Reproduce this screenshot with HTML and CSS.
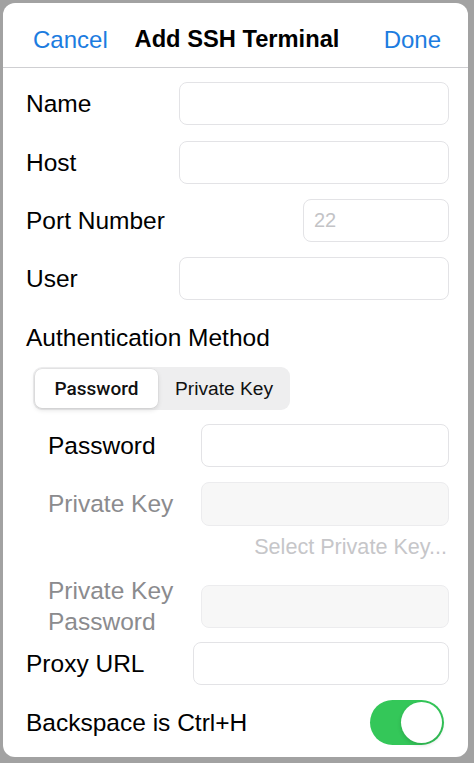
FILE: index.html
```html
<!DOCTYPE html>
<html>
<head>
<meta charset="utf-8">
<link rel="stylesheet" href="styles.css">
</head>
<body>
<div class="sheet">
  <header class="nav">
    <span class="nav-btn left">Cancel</span>
    <span class="nav-title">Add SSH Terminal</span>
    <span class="nav-btn right">Done</span>
  </header>
  <main class="form">
    <div class="row r-name">
      <span class="label">Name</span>
      <span class="field"></span>
    </div>
    <div class="row r-host">
      <span class="label">Host</span>
      <span class="field"></span>
    </div>
    <div class="row r-port">
      <span class="label">Port Number</span>
      <span class="field port"><span class="ph">22</span></span>
    </div>
    <div class="row r-user">
      <span class="label">User</span>
      <span class="field"></span>
    </div>
    <div class="row r-auth">
      <span class="label">Authentication Method</span>
    </div>
    <div class="segment">
      <span class="seg selected">Password</span>
      <span class="seg">Private Key</span>
    </div>
    <div class="row sub r-pass">
      <span class="label">Password</span>
      <span class="field"></span>
    </div>
    <div class="row sub r-key">
      <span class="label disabled">Private Key</span>
      <span class="field off"></span>
    </div>
    <div class="select-key">Select Private Key...</div>
    <div class="row sub r-keypass">
      <span class="label disabled two">Private Key<br>Password</span>
      <span class="field off"></span>
    </div>
    <div class="row r-proxy">
      <span class="label proxy">Proxy URL</span>
      <span class="field"></span>
    </div>
    <div class="row r-bs">
      <span class="label">Backspace is Ctrl+H</span>
      <span class="toggle"><span class="knob"></span></span>
    </div>
  </main>
</div>
</body>
</html>
```
FILE: styles.css
```css
html, body {
  margin: 0;
  padding: 0;
}
body {
  width: 474px;
  height: 763px;
  background: #a2a2a2;
  font-family: "Liberation Sans", Arial, sans-serif;
  color: #000;
  overflow: hidden;
}
.sheet {
  margin: 3px 0 0 3px;
  width: 465px;
  height: 754px;
  background: #fff;
  border-radius: 12px;
  overflow: hidden;
}
.nav {
  height: 65px;
  border-bottom: 1.5px solid #cfcfd2;
  box-sizing: border-box;
  display: grid;
  grid-template-columns: 1fr auto 1fr;
  align-items: center;
  padding: 9px 27px 0 30px;
  font-size: 24px;
}
.nav-btn {
  color: #1c7ce0;
}
.nav-btn.right {
  justify-self: end;
}
.nav-title {
  font-weight: bold;
  font-size: 23.7px;
}
.form {
  display: flex;
  flex-direction: column;
  padding: 0 19px 0 23px;
}
.row {
  display: flex;
  align-items: center;
  min-height: 43px;
}
.row.sub {
  padding-left: 22px;
}
.label {
  font-size: 24.5px;
  width: 153px;
  flex: none;
  white-space: nowrap;
}
.label.disabled {
  color: #8b8b8e;
}
.label.two {
  line-height: 31px;
}
.label.proxy {
  width: 167px;
}
.field {
  flex: 1;
  height: 43px;
  box-sizing: border-box;
  border: 1px solid #e3e3e6;
  border-radius: 8px;
  background: #fff;
  display: flex;
  align-items: center;
}
.field.off {
  background: #f7f7f7;
  border-color: #ececee;
}
.field.port {
  flex: none;
  width: 146px;
  margin-left: auto;
  padding-left: 10px;
}
.ph {
  font-size: 20px;
  color: #c3c3c6;
}
.r-name { margin-top: 14px; }
.r-host { margin-top: 16px; }
.r-port { margin-top: 15px; }
.r-user { margin-top: 15px; }
.r-auth { margin-top: 16px; }
.r-auth .label { width: auto; }
.segment {
  margin: 8px 0 0 7px;
  width: 257px;
  height: 43px;
  box-sizing: border-box;
  background: #eeeeef;
  border-radius: 9px;
  padding: 2px;
  display: flex;
}
.seg {
  flex: 1;
  display: flex;
  align-items: center;
  justify-content: center;
  font-size: 19.2px;
  color: #111;
  padding-left: 2px;
}
.seg.selected {
  flex: none;
  width: 123px;
  padding-left: 0;
  background: #fff;
  border-radius: 7px;
  box-shadow: 0 2px 5px rgba(0, 0, 0, 0.12), 0 0 0 0.5px rgba(0, 0, 0, 0.06);
  font-family: Roboto, "Liberation Sans", sans-serif;
  font-weight: 500;
  font-size: 19px;
}
.r-pass { margin-top: 14px; }
.r-key { margin-top: 15px; }
.r-key .field { height: 44px; }
.select-key {
  margin-top: 10px;
  height: 22px;
  line-height: 22px;
  text-align: right;
  padding-right: 2px;
  font-size: 21.6px;
  color: #c6c6c9;
}
.r-keypass { margin-top: 17px; }
.r-proxy { margin-top: 5px; }
.r-bs {
  margin-top: 15px;
  min-height: 45px;
  justify-content: space-between;
}
.r-bs .label { width: auto; }
.toggle {
  width: 74px;
  height: 45px;
  margin-right: 5px;
  border-radius: 23px;
  background: #34c759;
  box-sizing: border-box;
  padding: 2px;
  display: flex;
  justify-content: flex-end;
}
.knob {
  width: 41px;
  height: 41px;
  border-radius: 50%;
  background: #fff;
  box-shadow: 0 2px 4px rgba(0, 0, 0, 0.15);
}
```
